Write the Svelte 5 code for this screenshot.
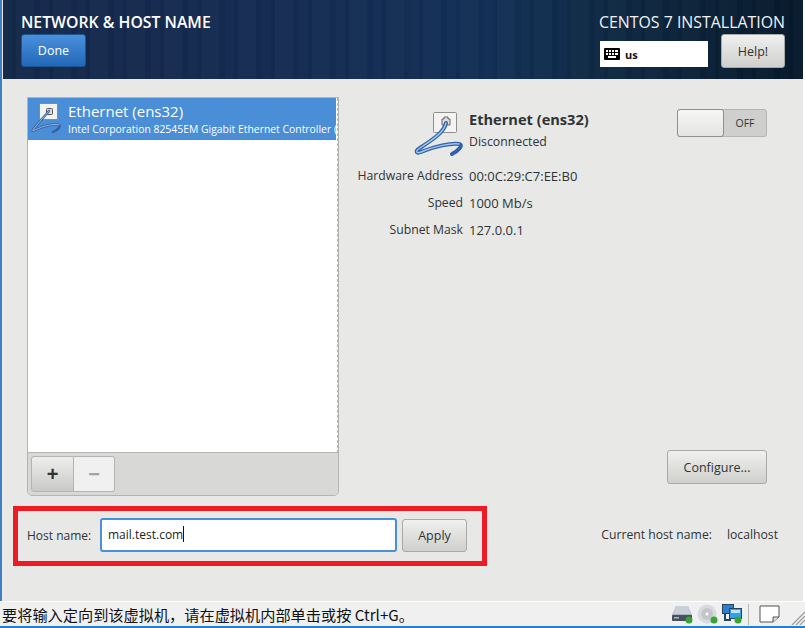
<script lang="ts">
    const details = [
        { label: "Hardware Address", value: "00:0C:29:C7:EE:B0" },
        { label: "Speed", value: "1000 Mb/s" },
        { label: "Subnet Mask", value: "127.0.0.1" }
    ];
</script>

<div class="window">
    <div class="guest">
        <header class="topbar">
            <div class="top-left">
                <h1>NETWORK &amp; HOST NAME</h1>
                <button class="done">Done</button>
            </div>
            <div class="top-right">
                <div class="product">CENTOS 7 INSTALLATION</div>
                <div class="top-controls">
                    <div class="layout">
                        <svg width="16" height="12" viewBox="0 0 16 12">
                            <rect width="16" height="12" rx="1" fill="#000" />
                            <g fill="#fff">
                                <rect x="2" y="2" width="2" height="2" />
                                <rect x="5" y="2" width="2" height="2" />
                                <rect x="8" y="2" width="2" height="2" />
                                <rect x="11" y="2" width="3" height="2" />
                                <rect x="2" y="5" width="2" height="2" />
                                <rect x="5" y="5" width="2" height="2" />
                                <rect x="8" y="5" width="2" height="2" />
                                <rect x="11" y="5" width="3" height="2" />
                                <rect x="4" y="8" width="8" height="2" />
                            </g>
                        </svg>
                        <span>us</span>
                    </div>
                    <button class="btn help">Help!</button>
                </div>
            </div>
        </header>

        <main class="content">
            <div class="columns">
                <section class="devices">
                    <div class="list">
                        <div class="device">
                            <svg class="dev-icon" width="38" height="36" viewBox="0 0 38 36">
                                <rect x="10.5" y="2.5" width="18" height="16" fill="#f2f2f0" stroke="#8a8a88" />
                                <rect x="17.5" y="7.5" width="6" height="6" rx="1" fill="#ddd" stroke="#555" />
                                <path d="M20 10 C15 16 9 22 4 29 C3 30 4 30 6 29 C14 25 26 22 30 24 C32 25 29 29 24 31" fill="none" stroke="#33609f" stroke-width="2.4" stroke-linecap="round" />
                                <path d="M20 10 C15 16 9 22 4 29 C3 30 4 30 6 29 C14 25 26 22 30 24" fill="none" stroke="#a3c1e8" stroke-width="0.9" stroke-linecap="round" />
                            </svg>
                            <div class="dev-text">
                                <div class="dev-name">Ethernet (ens32)</div>
                                <div class="dev-desc">Intel Corporation 82545EM Gigabit Ethernet Controller (</div>
                            </div>
                        </div>
                    </div>
                    <div class="toolbar">
                        <div class="btn-pair">
                            <button class="add">+</button>
                            <button class="remove">−</button>
                        </div>
                    </div>
                </section>

                <section class="info">
                    <div class="info-top">
                        <div class="info-main">
                            <div class="info-head">
                                <svg class="big-icon" width="56" height="50" viewBox="0 0 56 50">
                                    <rect x="22.5" y="2.5" width="23" height="20" rx="1" fill="#f3f3f1" stroke="#8f8f8d" />
                                    <path d="M31 15 V9 h2 V7 h4 V9 h2 V15 Z" fill="#ddd" stroke="#666" />
                                    <path d="M35 13 C33 22 24 28 9 38 C4 41 5 44 10 42 C24 36 40 33 48 34 C53 35 47 41 41 44" fill="none" stroke="#2f62a8" stroke-width="4" stroke-linecap="round" />
                                    <path d="M35 13 C33 22 24 28 9 38 C4 41 5 44 10 42 C24 36 40 33 48 34" fill="none" stroke="#a5c5ef" stroke-width="1.4" stroke-linecap="round" />
                                </svg>
                                <div>
                                    <div class="iface">Ethernet (ens32)</div>
                                    <div class="state">Disconnected</div>
                                </div>
                            </div>
                            <div class="rows">
                                {#each details as d}
                                    <div class="key">{d.label}</div>
                                    <div class="val">{d.value}</div>
                                {/each}
                            </div>
                        </div>
                        <div class="switch">
                            <div class="knob"></div>
                            <div class="off">OFF</div>
                        </div>
                    </div>
                    <button class="btn configure">Configure...</button>
                </section>
            </div>

            <div class="host-line">
                <div class="host-box">
                    <span class="host-label">Host name:</span>
                    <div class="entry">mail.test.com<i class="caret"></i></div>
                    <button class="btn apply">Apply</button>
                </div>
                <div class="current">
                    <span>Current host name:</span>
                    <span>localhost</span>
                </div>
            </div>
        </main>
    </div>

    <footer class="statusbar">
        <span class="hint">要将输入定向到该虚拟机，请在虚拟机内部单击或按 Ctrl+G。</span>
        <div class="tray">
            <svg width="22" height="19" viewBox="0 0 22 19">
                <path d="M4 1 H16 L20 10 V16 H0 V10 Z" fill="#a9b4be" />
                <path d="M4 1 H16 L19 9 H1 Z" fill="#c9d1d8" />
                <rect x="0" y="10" width="20" height="6" rx="1" fill="#46515c" />
                <rect x="2" y="12" width="5" height="1.5" fill="#aab3bb" />
                <circle cx="17" cy="15" r="3.5" fill="#3aa335" />
            </svg>
            <svg width="22" height="20" viewBox="0 0 22 20">
                <circle cx="10" cy="10" r="9.5" fill="#d8dbde" />
                <circle cx="10" cy="10" r="6" fill="#c3c7cb" />
                <circle cx="10" cy="10" r="2.2" fill="#f7f7f7" stroke="#a4a8ac" stroke-width="0.6" />
                <circle cx="17" cy="16" r="3.5" fill="#3aa335" />
            </svg>
            <svg width="21" height="20" viewBox="0 0 21 20">
                <rect x="0.5" y="0.5" width="11" height="9" fill="#2f7fd0" stroke="#26465f" />
                <path d="M3 10 V16 H9" fill="none" stroke="#26465f" stroke-width="2" />
                <rect x="7.5" y="4.5" width="12" height="10" fill="#35a0e8" stroke="#26465f" />
                <rect x="9" y="6" width="9" height="3" fill="#bfe2fb" />
                <circle cx="16" cy="16" r="3.5" fill="#3aa335" />
            </svg>
            <div class="sep"></div>
            <svg width="21" height="18" viewBox="0 0 21 18">
                <path d="M1 1 H20 V12 L14 17 H1 Z" fill="#fff" stroke="#555" />
                <path d="M14 17 V12 H20" fill="#ddd" stroke="#555" />
            </svg>
            <svg class="grip" width="14" height="14" viewBox="0 0 14 14">
                <path d="M1 14 L14 1 M5 14 L14 5 M9 14 L14 9" stroke="#9a9a9a" stroke-width="1.2" />
            </svg>
        </div>
    </footer>
</div>

<style>
    :global(body) {
        margin: 0;
        background: #fff;
    }

    .window {
        width: 805px;
        height: 628px;
        display: flex;
        flex-direction: column;
        overflow: hidden;
        font-family: "Open Sans", "Noto Sans", sans-serif;
        color: #2e3436;
    }

    .guest {
        height: 601px;
        margin-right: 2px;
        border-left: 2px solid #3f7fc4;
        padding-left: 1px;
        background: #e8e8e7;
        display: flex;
        flex-direction: column;
        box-sizing: border-box;
    }

    .topbar {
        height: 79px;
        flex: none;
        box-sizing: border-box;
        display: flex;
        justify-content: space-between;
        padding: 13px 18px 0 18px;
        background:
            repeating-linear-gradient(90deg, rgba(255, 255, 255, 0.012) 0 9px, rgba(0, 0, 0, 0.035) 9px 13px, rgba(255, 255, 255, 0.018) 13px 31px, rgba(0, 0, 0, 0.02) 31px 37px),
            linear-gradient(90deg, #14284a 0%, #152b52 35%, #122f55 62%, #0e2740 78%, #06192b 100%);
    }

    h1 {
        margin: 0;
        font-size: 15.8px;
        line-height: 19px;
        font-weight: 600;
        color: #fff;
        white-space: nowrap;
    }

    .done {
        display: block;
        margin-top: 2px;
        width: 65px;
        height: 33px;
        padding: 0;
        border: 1px solid #1c5590;
        border-radius: 3px;
        background: linear-gradient(#4a90dc, #2168b8);
        color: #fff;
        font: 12.5px "Open Sans", sans-serif;
    }

    .top-right {
        display: flex;
        flex-direction: column;
        align-items: flex-end;
    }

    .product {
        font-size: 15.9px;
        line-height: 19px;
        color: #f0f2f4;
        white-space: nowrap;
    }

    .top-controls {
        display: flex;
        align-items: flex-start;
        gap: 13px;
        margin-top: 2px;
    }

    .layout {
        margin-top: 7px;
        width: 108px;
        height: 26px;
        background: #fff;
        box-sizing: border-box;
        padding-left: 4px;
        display: flex;
        align-items: center;
        gap: 5px;
        font-size: 11px;
        font-weight: 700;
        color: #111;
    }

    .btn {
        padding: 0;
        border: 1px solid #a9a9a7;
        border-radius: 3px;
        background: linear-gradient(#f0f0ee, #cfcfcd);
        color: #2e3436;
        font: 12.5px "Open Sans", sans-serif;
    }

    .help {
        width: 64px;
        height: 34px;
    }

    .content {
        flex: 1;
        display: flex;
        flex-direction: column;
    }

    .columns {
        display: flex;
        height: 427px;
    }

    .devices {
        width: 312px;
        height: 399px;
        margin: 18px 0 0 24px;
        box-sizing: border-box;
        border: 1px solid #b4b4b2;
        border-radius: 0 0 5px 5px;
        display: flex;
        flex-direction: column;
        overflow: hidden;
    }

    .list {
        flex: 1;
        background: #fff;
        border-bottom: 1px solid #b4b4b2;
        border-right: 1px dashed #b4b4b2;
    }

    .device {
        height: 42px;
        background: #4a8ed8;
        display: flex;
        align-items: center;
        color: #fff;
        gap: 1px;
        margin-right: 1px;
    }

    .dev-icon {
        flex: none;
        margin-left: 1px;
    }

    .dev-text {
        flex: 1;
        min-width: 0;
        white-space: nowrap;
        overflow: hidden;
    }

    .dev-name {
        font-size: 15px;
        line-height: 19px;
    }

    .dev-desc {
        font-size: 10.4px;
        line-height: 16px;
    }

    .toolbar {
        height: 42px;
        flex: none;
        background: #d8d8d6;
        padding: 3px 0 0 3px;
        box-sizing: border-box;
    }

    .btn-pair {
        display: flex;
        width: 84px;
        height: 36px;
    }

    .add,
    .remove {
        padding: 0;
        border: 1px solid #b4b4b2;
        font: 700 20px "Liberation Sans", sans-serif;
    }

    .add {
        width: 43px;
        border-radius: 3px 0 0 3px;
        background: linear-gradient(#eeeeec, #c9c9c7);
        color: #2e3436;
    }

    .remove {
        width: 41px;
        border-left: 0;
        border-radius: 0 3px 3px 0;
        background: #f0f0f0;
        color: #a4a4a4;
    }

    .info {
        flex: 1;
        display: flex;
        flex-direction: column;
        align-items: flex-end;
        padding: 30px 36px 0 18px;
    }

    .info-top {
        flex: 1;
        width: 100%;
        display: flex;
        justify-content: space-between;
        align-items: flex-start;
    }

    .info-head {
        display: flex;
        align-items: flex-start;
        margin: 1px 0 0 54px;
    }

    .big-icon {
        flex: none;
        margin-right: 2px;
    }

    .iface {
        font-size: 14.6px;
        line-height: 18px;
        font-weight: 700;
        white-space: nowrap;
    }

    .state {
        margin-top: 5px;
        font-size: 12.3px;
        line-height: 18px;
    }

    .rows {
        display: grid;
        grid-template-columns: 106px auto;
        column-gap: 6px;
        row-gap: 9px;
        margin-top: 7px;
        line-height: 18px;
    }

    .key {
        font-size: 12.2px;
        text-align: right;
        white-space: nowrap;
    }

    .val {
        font-size: 13px;
        white-space: nowrap;
    }

    .switch {
        width: 90px;
        height: 28px;
        display: flex;
        background: #cfcfcd;
        border: 1px solid #b4b4b2;
        border-radius: 3px;
        box-sizing: border-box;
    }

    .knob {
        width: 45px;
        background: linear-gradient(#f6f6f5, #e4e4e2);
        border: 1px solid #8f8f8d;
        border-radius: 3px;
        margin: -1px 0 -1px -1px;
    }

    .off {
        flex: 1;
        text-align: center;
        font-size: 10.5px;
        font-weight: 500;
        line-height: 26px;
    }

    .configure {
        width: 100px;
        height: 34px;
        margin-bottom: 22px;
    }

    .host-line {
        display: flex;
        justify-content: space-between;
        align-items: center;
        padding: 0 25px 0 10px;
    }

    .host-box {
        width: 474px;
        height: 60px;
        box-sizing: border-box;
        border: 5px solid #ed1c24;
        display: flex;
        align-items: center;
        padding: 0 0 2px 9px;
        font-size: 12px;
    }

    .host-label {
        width: 73px;
        flex: none;
        white-space: nowrap;
    }

    .entry {
        width: 297px;
        height: 34px;
        box-sizing: border-box;
        border: 2px solid #4a90d9;
        border-radius: 3px;
        background: #fff;
        padding-left: 6px;
        line-height: 30px;
        color: #222;
        flex: none;
    }

    .caret {
        display: inline-block;
        width: 1px;
        height: 16px;
        background: #111;
        vertical-align: -3px;
    }

    .apply {
        width: 65px;
        height: 33px;
        margin-left: 5px;
    }

    .current {
        display: flex;
        gap: 15px;
        font-size: 12.2px;
        white-space: nowrap;
        padding-bottom: 4px;
    }

    .statusbar {
        height: 27px;
        box-sizing: border-box;
        background: #f0f0f0;
        border-top: 1px solid #fff;
        border-bottom: 2px solid #1f7fd0;
        display: flex;
        justify-content: space-between;
        align-items: center;
        padding: 0 0 0 2px;
    }

    .hint {
        font: 15.2px "Noto Sans CJK SC", "Liberation Sans", sans-serif;
        color: #111;
        white-space: nowrap;
    }

    .tray {
        display: flex;
        align-items: center;
        gap: 3px;
    }

    .sep {
        width: 1px;
        height: 21px;
        background: #b8b8b8;
        margin: 0 7px 0 2px;
    }

    .grip {
        margin-left: 8px;
        align-self: flex-end;
    }
</style>
